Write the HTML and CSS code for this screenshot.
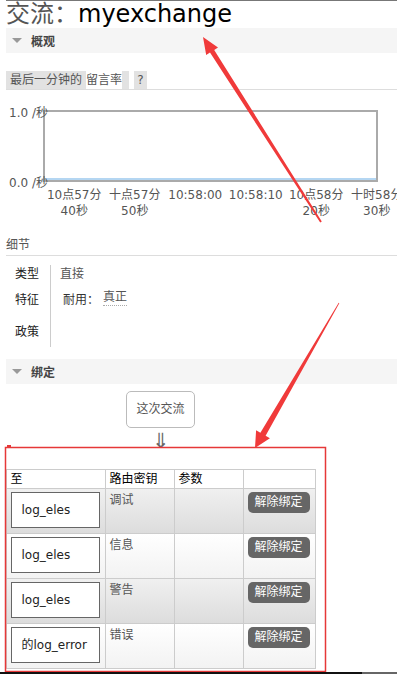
FILE: index.html
```html
<!DOCTYPE html>
<html lang="zh">
<head>
  <meta charset="UTF-8" />
  <title>交流：myexchange</title>
  <link rel="stylesheet" href="styles.css">
</head>
<body>
  <div class="page">
    <h1>交流：<b>myexchange</b></h1>

    <div class="section-head"><span class="tri"></span>概观</div>

    <div class="tabs">
      <span class="tab label">最后一分钟的</span>
      <span class="tab on">留言率</span>
      <span class="tab gap"></span>
      <span class="tab help">?</span>
    </div>

    <div class="chart">
      <div class="chart-row">
        <div class="yaxis">
          <span>1.0 /秒</span>
          <span>0.0 /秒</span>
        </div>
        <div class="plot"><div class="series"></div></div>
      </div>
      <div class="xaxis">
        <span>10点57分<br>40秒</span>
        <span>十点57分<br>50秒</span>
        <span>10:58:00</span>
        <span>10:58:10</span>
        <span>10点58分<br>20秒</span>
        <span>十时58分<br>30秒</span>
      </div>
    </div>

    <h3 class="sub">细节</h3>
    <div class="details">
      <div class="drow r1"><span class="dkey">类型</span><span class="dval">直接</span></div>
      <div class="drow r2"><span class="dkey">特征</span><span class="dval"><span class="prop">耐用：</span><abbr>真正</abbr></span></div>
      <div class="drow r3"><span class="dkey">政策</span><span class="dval"></span></div>
    </div>

    <div class="section-head"><span class="tri"></span>绑定</div>

    <div class="bindings">
      <div class="src">这次交流</div>
      <div class="down">⇓</div>
      <table class="btable">
        <colgroup><col class="c1"><col class="c2"><col class="c3"><col class="c4"></colgroup>
        <thead>
          <tr><th>至</th><th>路由密钥</th><th>参数</th><th></th></tr>
        </thead>
        <tbody>
          <tr class="alt1">
            <td><div class="queue">log_eles</div></td><td class="key">调试</td><td></td>
            <td><button class="unbind">解除绑定</button></td>
          </tr>
          <tr class="alt2">
            <td><div class="queue">log_eles</div></td><td class="key">信息</td><td></td>
            <td><button class="unbind">解除绑定</button></td>
          </tr>
          <tr class="alt1">
            <td><div class="queue">log_eles</div></td><td class="key">警告</td><td></td>
            <td><button class="unbind">解除绑定</button></td>
          </tr>
          <tr class="alt2">
            <td><div class="queue">的log_error</div></td><td class="key">错误</td><td></td>
            <td><button class="unbind">解除绑定</button></td>
          </tr>
        </tbody>
      </table>
    </div>
  </div>

  <!-- annotation arrows and box drawn over the page -->
  <svg class="marks" width="397" height="674" viewBox="0 0 397 674">
    <polygon fill="#f03a3a" points="203,37 218,47.5 214.2,50 321.8,221.5 320.2,222.5 210,52.6 206.2,55.1"/>
    <polygon fill="#f03a3a" points="255,448 256.1,430.2 260.4,432.7 338.7,302.8 339.3,303.2 265.6,435.7 269.9,438.2"/>
    <rect x="5.5" y="447.5" width="320" height="224" fill="none" stroke="#e63838" stroke-width="1.5"/>
    <rect x="7" y="445" width="4" height="2" fill="#e63838"/>
  </svg>
  <div class="scrollbar"><div class="thumb"></div></div>
</body>
</html>
```

FILE: styles.css
```css
* { box-sizing: border-box; }
html, body { overflow: hidden; }
body { margin: 0; position: relative; width: 397px; height: 674px; font-family: "DejaVu Sans", "Noto Sans CJK SC", sans-serif; font-size: 12px; color: #444; background: #fff; }
.page { margin-left: 6px; border-top: 1px solid #777; }

h1 { margin: 0; height: 27px; font-size: 24px; line-height: 27px; font-weight: normal; color: #555; white-space: nowrap; }
h1 b { font-weight: normal; color: #000; }

.section-head { display: flex; align-items: center; height: 25px; padding-left: 6px; background: #f5f5f5; font-weight: bold; color: #444; }
.tri { width: 0; height: 0; margin-right: 9px; border-left: 5px solid transparent; border-right: 5px solid transparent; border-top: 5px solid #999; }

.tabs { display: flex; height: 19px; margin-top: 18px; border-bottom: 1px solid #ddd; line-height: 18px; color: #555; }
.tab { height: 18px; }
.tab.label { width: 80px; padding-left: 4px; background: #e2e2e2; }
.tab.on { width: 36px; background: #fff; }
.tab.gap { width: 7px; margin-right: 5px; background: #e2e2e2; }
.tab.help { width: 13px; text-align: center; background: #e2e2e2; }

.chart { margin-top: 16px; width: 391px; overflow: hidden; color: #555; }
.chart-row { display: flex; align-items: flex-start; }
.yaxis { position: relative; z-index: 1; display: flex; flex-direction: column; justify-content: space-between; width: 42px; height: 84px; line-height: 14px; text-align: right; white-space: nowrap; }
.plot { margin: 4px 0 0 -5px; width: 335px; height: 72px; border: 2px solid #aaa; }
.series { height: 100%; border-bottom: 2px solid #b4d6f2; }
.xaxis { display: flex; margin: -3px 0 0 38px; width: 400px; line-height: 16px; }
.xaxis span { flex: none; width: 60.5px; text-align: center; white-space: nowrap; }

.sub { margin: 18px 0 0; height: 19px; padding: 0; border-bottom: 1px solid #ddd; font-size: 12px; font-weight: normal; line-height: 16px; color: #555; }

.details { margin-top: 9px; }
.drow { display: flex; }
.drow.r1 { height: 17px; }
.drow.r2 { height: 32px; }
.drow.r3 { height: 33px; }
.dkey { width: 44px; padding-right: 11px; text-align: right; color: #222; align-self: center; }
.r1 .dkey { align-self: flex-start; line-height: 18px; }
.dval { display: flex; align-items: center; border-left: 1px solid #ccc; padding-left: 9px; color: #555; }
.r1 .dval { align-items: flex-start; line-height: 18px; }
.prop { margin-left: 3px; margin-right: 4px; color: #333; }
abbr { text-decoration: none; border-bottom: 1px dotted #aaa; line-height: 15px; }

.details + .section-head { margin-top: 12px; }

.bindings { display: flex; flex-direction: column; align-items: center; width: 309px; }
.src { margin-top: 7px; width: 69px; height: 37px; border: 1px solid #bbb; border-radius: 5px; line-height: 35px; text-align: center; color: #555; }
.down { margin-top: 2px; height: 22px; font-size: 21px; line-height: 22px; color: #666; }

.btable { margin-top: 17px; width: 309px; table-layout: fixed; border-collapse: collapse; }
.c1 { width: 99px; }
.c2 { width: 69px; }
.c3 { width: 69px; }
.c4 { width: 72px; }
.btable th, .btable td { border: 1px solid #ccc; padding: 3px 4px 5px; vertical-align: top; text-align: left; font-weight: normal; }
.btable th { height: 19px; padding: 0 4px; line-height: 17px; color: #000; vertical-align: middle; }
.btable tr.alt1 { background: linear-gradient(#f0f0f0, #dcdcdc); }
.btable tr.alt2 { background: linear-gradient(#fff, #f2f2f2); }
.queue { width: 89px; height: 36px; padding-left: 10px; border: 1px solid #666; background: #fff; line-height: 34px; color: #222; white-space: nowrap; }
.key { line-height: 16px; color: #555; }
.unbind { display: block; width: 62px; height: 21px; padding: 0; border: none; border-radius: 5px; background: #666; color: #fff; font-family: inherit; font-size: 12px; line-height: 21px; }

.marks { position: absolute; top: 0; left: 0; pointer-events: none; }
.scrollbar { position: fixed; left: 0; bottom: 0; width: 397px; height: 2px; background: #666; }
.thumb { width: 362px; height: 2px; background: #111; }
```
